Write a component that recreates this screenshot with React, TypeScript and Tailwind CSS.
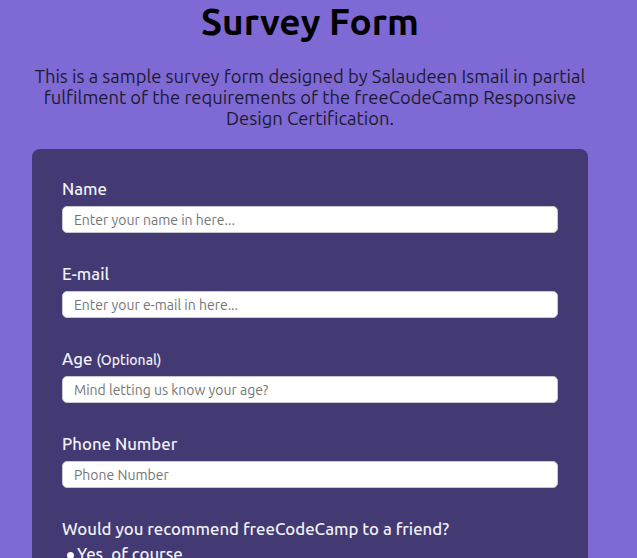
const FONT = { fontFamily: "Ubuntu, Lato, 'Noto Sans', sans-serif" };

interface Field {
  id: string;
  label: string;
  extra?: string;
  placeholder: string;
}

const FIELDS: Field[] = [
  { id: "name", label: "Name", placeholder: "Enter your name in here..." },
  { id: "email", label: "E-mail", placeholder: "Enter your e-mail in here..." },
  { id: "age", label: "Age", extra: "(Optional)", placeholder: "Mind letting us know your age?" },
  { id: "phone", label: "Phone Number", placeholder: "Phone Number" },
];

export default function App() {
  return (
    <div className="min-h-[558px] bg-[#7f69d4] overflow-hidden" style={FONT}>
      <div className="w-[620px] flex flex-col items-center">
        <h1 className="text-[37px] leading-[42px] font-bold text-black mt-[1px]">Survey Form</h1>
        <p className="mt-[23px] text-[18.4px] leading-[21px] text-[#1b1b32] text-center">
          This is a sample survey form designed by Salaudeen Ismail in partial
          <br />
          fulfilment of the requirements of the freeCodeCamp Responsive
          <br />
          Design Certification.
        </p>

        <form className="mt-[20px] w-[556px] bg-[#433a73] rounded-[8px] px-[30px] pt-[28px] pb-8">
          {FIELDS.map((f) => (
            <div key={f.id} className="mb-[29px]">
              <label htmlFor={f.id} className="block h-[24px] text-[16.8px] leading-[24px] mb-[5px] font-medium text-[#f0f0f5]">
                {f.label}
                {f.extra && <span className="text-[14px] leading-[16px] ml-1">{f.extra}</span>}
              </label>
              <input
                id={f.id}
                type="text"
                placeholder={f.placeholder}
                className="block w-full h-[27px] bg-white rounded-[5px] border border-[#c8c8d0] px-[11px] text-[14px] text-[#333] placeholder:text-[#757575] outline-none"
                style={FONT}
              />
            </div>
          ))}

          <div className="text-[16.8px] leading-[24px] font-medium text-[#f0f0f5]">
            Would you recommend freeCodeCamp to a friend?
          </div>
          <label className="flex items-center mt-[3px] ml-[5px] text-[16.8px] leading-[20px] font-medium text-[#f0f0f5]">
            <span className="w-[7px] h-[7px] rounded-full bg-white mr-[3px] mt-[3px]" />
            Yes, of course
          </label>
        </form>
      </div>
    </div>
  );
}
